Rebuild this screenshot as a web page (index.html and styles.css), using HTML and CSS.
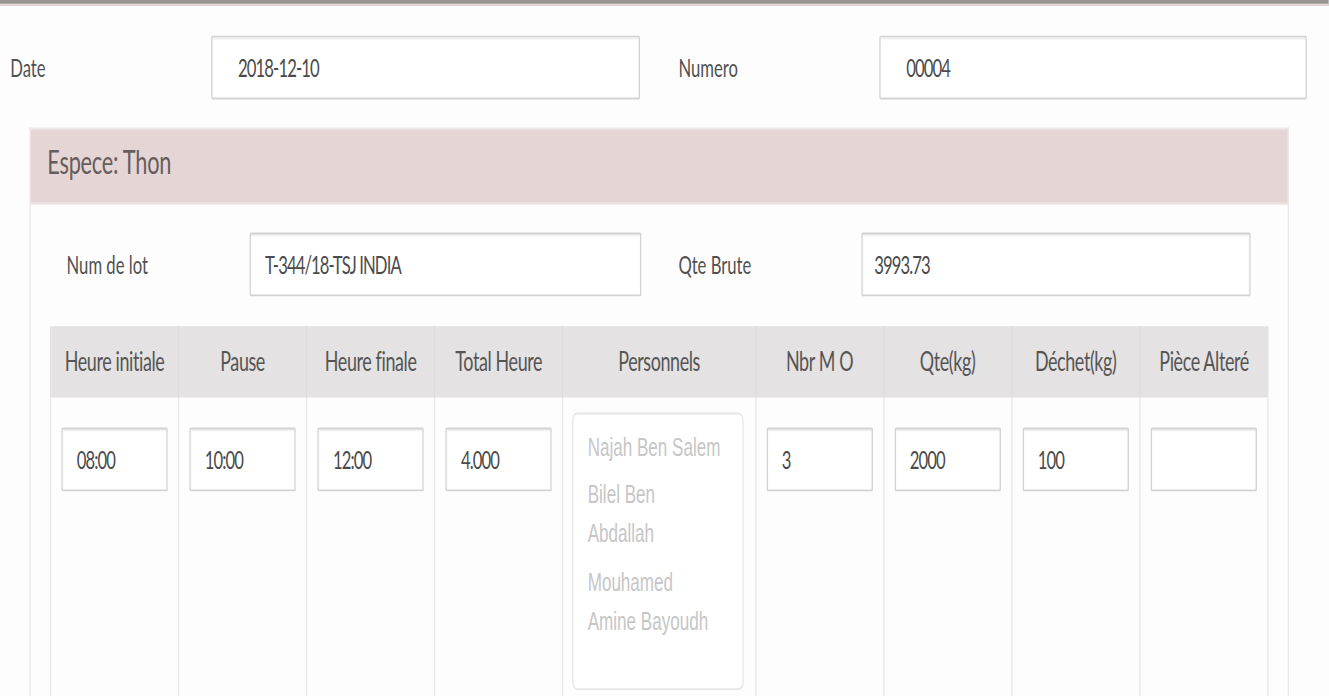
FILE: index.html
```html
<!DOCTYPE html>
<html lang="fr">
<head>
    <meta charset="UTF-8">
    <meta name="viewport" content="width=device-width, initial-scale=1.0">
    <title>Fiche de production</title>
    <link rel="stylesheet" href="styles.css">
</head>
<body>
    <div class="page">
        <div class="topline"></div>

        <div class="form-row top-row">
            <label class="lbl lbl-date" for="date">Date</label>
            <input class="field field-wide" type="text" id="date" value="2018-12-10">
            <label class="lbl lbl-num" for="numero">Numero</label>
            <input class="field field-wide" type="text" id="numero" value="00004">
        </div>

        <div class="panel">
            <div class="panel-head">Espece: Thon</div>
            <div class="panel-body">
                <div class="form-row lot-row">
                    <label class="lbl lbl-lot" for="lot">Num de lot</label>
                    <input class="field" type="text" id="lot" value="T-344/18-TSJ INDIA">
                    <label class="lbl lbl-qte" for="qte">Qte Brute</label>
                    <input class="field field-qte" type="text" id="qte" value="3993.73">
                </div>

                <table class="prod">
                    <colgroup>
                        <col class="c-std"><col class="c-std"><col class="c-std"><col class="c-std">
                        <col class="c-pers">
                        <col class="c-std"><col class="c-std"><col class="c-std"><col class="c-std">
                    </colgroup>
                    <thead>
                        <tr>
                            <th>Heure initiale</th>
                            <th>Pause</th>
                            <th>Heure finale</th>
                            <th>Total Heure</th>
                            <th>Personnels</th>
                            <th>Nbr M O</th>
                            <th>Qte(kg)</th>
                            <th>Déchet(kg)</th>
                            <th>Pièce Alteré</th>
                        </tr>
                    </thead>
                    <tbody>
                        <tr>
                            <td><input class="field cell-field" type="text" value="08:00"></td>
                            <td><input class="field cell-field" type="text" value="10:00"></td>
                            <td><input class="field cell-field" type="text" value="12:00"></td>
                            <td><input class="field cell-field" type="text" value="4.000"></td>
                            <td class="pers-cell">
                                <div class="listbox">
                                    <div class="opt">Najah Ben Salem</div>
                                    <div class="opt">Bilel Ben Abdallah</div>
                                    <div class="opt">Mouhamed Amine Bayoudh</div>
                                </div>
                            </td>
                            <td><input class="field cell-field" type="text" value="3"></td>
                            <td><input class="field cell-field" type="text" value="2000"></td>
                            <td><input class="field cell-field" type="text" value="100"></td>
                            <td><input class="field cell-field" type="text" value=""></td>
                        </tr>
                    </tbody>
                </table>
            </div>
        </div>
    </div>
</body>
</html>
```

FILE: styles.css
```css
html {
    overflow: hidden;
}
body {
    margin: 0;
    padding: 0;
    height: 696px;
    background-color: #fdfdfd;
    font-family: Lato, "Open Sans", sans-serif;
    color: #555;
}
/* la capture est étirée : on garde la mise en page d'origine et on l'agrandit */
.page {
    width: 1038px;
    height: 371px;
    transform: scale(1.28, 1.875);
    transform-origin: 0 0;
}
.topline {
    height: 1.5px;
    background-color: #979692;
    border-bottom: 0.6px solid #efdcdc;
}
.form-row {
    display: grid;
    align-items: center;
}
.top-row {
    margin-top: 16px;
    grid-template-columns: 165px 335px 187px 334px;
}
.lbl {
    font-size: 13px;
    color: #505050;
}
.lbl-date {
    padding-left: 8px;
}
.lbl-num {
    padding-left: 30px;
}
.field {
    box-sizing: border-box;
    height: 34px;
    width: 100%;
    margin: 0;
    padding: 0 11px;
    border: 1px solid #d3d3d3;
    border-radius: 1px;
    background-color: #fff;
    box-shadow: inset 0 1px 1px rgba(0,0,0,0.06);
    font-family: Lato, "Open Sans", sans-serif;
    font-size: 13px;
    letter-spacing: -0.7px;
    color: #4b4b4b;
    outline: none;
}
.field-wide {
    padding-left: 20px;
}
.field-qte {
    padding-left: 9px;
}
/* Panneau espèce */
.panel {
    margin-top: 15px;
    margin-left: 23px;
    width: 984px;
    height: 320px;
    box-sizing: border-box;
    border: 1px solid #ece6e6;
    border-bottom: none;
}
.panel-head {
    height: 39px;
    line-height: 36px;
    padding-left: 13px;
    background-color: #e6d5d5;
    border-bottom: 1px solid #eee3e3;
    font-size: 17px;
    letter-spacing: -0.2px;
    color: #655d5d;
}
.panel-body {
    padding: 15px 15px 0 15px;
}
.lot-row {
    grid-template-columns: 156px 306px 172px 304px;
}
.lbl-lot {
    padding-left: 13px;
}
.lbl-qte {
    padding-left: 29px;
}
/* Tableau de production */
.prod {
    margin-top: 16px;
    width: 952px;
    border-collapse: collapse;
    table-layout: fixed;
}
.c-std {
    width: 10.52%;
}
.c-pers {
    width: 15.84%;
}
.prod th {
    height: 38px;
    padding: 0;
    background-color: #e4e2e2;
    border-left: 1px solid #dcdada;
    font-weight: normal;
    font-size: 14px;
    letter-spacing: -0.3px;
    color: #555;
    text-align: center;
}
.prod th:first-child {
    border-left: 1px solid #e4e2e2;
}
.prod td {
    height: 180px;
    padding: 8px;
    vertical-align: top;
    border-left: 1px solid #e9e9e9;
    border-right: 1px solid #e9e9e9;
}
.prod td.pers-cell {
    padding-left: 7px;
}
.cell-field {
    margin-top: 8px;
}
.listbox {
    box-sizing: border-box;
    width: 134px;
    height: 148px;
    padding: 6px 15px 6px 11px;
    border: 1px solid #e6e6e6;
    border-radius: 4px;
    background-color: #fff;
    font-family: "Liberation Sans", Arial, sans-serif;
    font-size: 13.33px;
    line-height: 20.8px;
    color: #c6c6c6;
}
.opt {
    padding: 2.4px 0;
}
```
